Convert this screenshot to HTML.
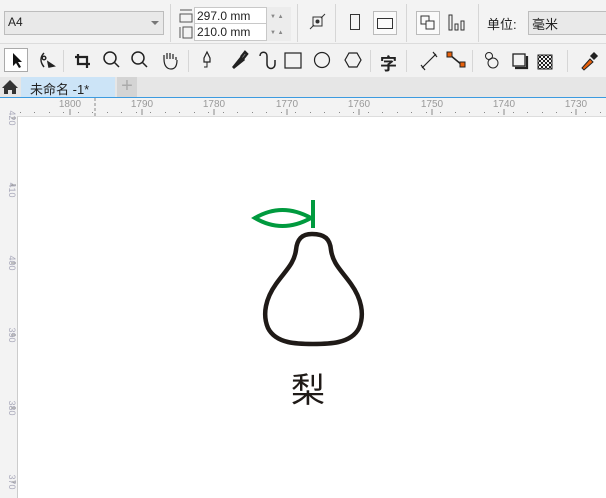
<!DOCTYPE html>
<html><head><meta charset="utf-8"><style>
*{margin:0;padding:0;box-sizing:border-box}
body{width:606px;height:498px;overflow:hidden;background:#f2f2f2;font-family:"Liberation Sans","Noto Sans CJK SC",sans-serif;position:relative}
.a{position:absolute}
.sep{position:absolute;width:1px;background:#d6d6d6}
.t{font-size:12px;color:#222}
</style></head><body>
<!-- toolbar1 -->
<div class="a" style="left:0;top:0;width:606px;height:44px;border-bottom:1px solid #dcdcdc;background:#f3f3f3"></div>
<div class="a" style="left:4px;top:11px;width:160px;height:24px;border:1px solid #bdbdbd;background:#e9e9e9"></div>
<div class="a t" style="left:8px;top:15px">A4</div>
<div class="a" style="left:151px;top:21px;border-left:4px solid transparent;border-right:4px solid transparent;border-top:4px solid #777"></div>
<div class="sep" style="left:170px;top:4px;height:38px"></div>
<svg class="a" style="left:178px;top:8px" width="16" height="32"><path d="M2 2h12M2 6h12v8H2z M2 19v11M5 19h9v11H5z" stroke="#555" fill="none"/></svg>
<div class="a" style="left:194px;top:7px;width:97px;height:34px;border:1px solid #c8c8c8;background:#fff"></div>
<div class="a" style="left:194px;top:23px;width:97px;height:1px;background:#c8c8c8"></div>
<div class="a" style="left:266px;top:7px;width:25px;height:34px;background:#ececec;border-left:1px solid #c8c8c8"></div>
<div class="a t" style="left:197px;top:9px;font-size:12px">297.0 mm</div>
<div class="a t" style="left:197px;top:25px;font-size:12px">210.0 mm</div>
<div class="a" style="left:270px;top:14px;font-size:6px;color:#888">▼ ▲</div>
<div class="a" style="left:270px;top:30px;font-size:6px;color:#888">▼ ▲</div>
<div class="sep" style="left:297px;top:4px;height:38px"></div>
<svg class="a" style="left:308px;top:12px" width="20" height="20"><rect x="5" y="5" width="9" height="9" fill="none" stroke="#333"/><circle cx="9.5" cy="9.5" r="2" fill="#333"/><path d="M2 17l4-4M13 6l4-4" stroke="#333"/></svg>
<div class="sep" style="left:335px;top:4px;height:38px"></div>
<div class="a" style="left:350px;top:14px;width:10px;height:16px;border:1.5px solid #333"></div>
<div class="a" style="left:373px;top:11px;width:24px;height:24px;border:1px solid #bbb;background:#fafafa"></div>
<div class="a" style="left:377px;top:18px;width:16px;height:11px;border:1.5px solid #333"></div>
<div class="sep" style="left:406px;top:4px;height:38px"></div>
<div class="a" style="left:416px;top:11px;width:24px;height:24px;border:1px solid #bbb;background:#fafafa"></div>
<svg class="a" style="left:419px;top:14px" width="18" height="18"><rect x="2" y="2" width="8" height="8" fill="none" stroke="#333"/><rect x="7" y="7" width="8" height="8" fill="#fafafa" stroke="#333"/></svg>
<svg class="a" style="left:447px;top:14px" width="20" height="18"><rect x="2" y="1" width="3" height="15" fill="none" stroke="#333"/><rect x="8" y="10" width="3" height="6" fill="none" stroke="#333"/><rect x="14" y="7" width="3" height="9" fill="none" stroke="#333"/></svg>
<div class="sep" style="left:478px;top:4px;height:38px"></div>
<div class="a t" style="left:487px;top:14px;font-size:13px">单位:</div>
<div class="a" style="left:528px;top:11px;width:80px;height:24px;border:1px solid #bdbdbd;background:#e9e9e9"></div>
<div class="a t" style="left:532px;top:14px;font-size:13px">毫米</div>
<!-- toolbar2 -->
<div class="a" style="left:4px;top:48px;width:24px;height:24px;border:1px solid #aaa;background:#fff"></div>
<svg class="a" style="left:4px;top:48px" width="600" height="26" fill="none" stroke="#222" stroke-width="1.5">
<path d="M9 5v13l3-3 3 5 2-1-3-5h4z" fill="#111" stroke="none"/>
<path d="M40 5c-4 4-4 9 0 14" /><circle cx="40" cy="10" r="1.8" fill="#fff"/><path d="M44 14l6 4-5 1z" fill="#222"/>
<path d="M74 6v10h12M71 9h12v11" stroke-width="2.2"/>
<circle cx="106" cy="10" r="6"/><path d="M110 14l5 5"/>
<circle cx="134" cy="10" r="6"/><path d="M138 14l5 5"/>
<path d="M160 11v-4M163 11v-6M166 11v-6M169 11v-5M172 12v-3M160 11c0 8 4 10 7 10s6-2 6-9" stroke-width="1.2"/>
<path d="M203 4l-3 6v4h6v-4z" stroke-width="1.2"/><path d="M203 14v5h-3" stroke-width="1"/>
<path d="M229 19l8-10 3 3-10 8z" fill="#222"/><path d="M237 9l4-5 2 2-4 5" stroke-width="2.5"/>
<path d="M256 8c0-5 7-5 7 0v8c0 6 8 6 8 0v-4"/>
<rect x="281" y="5" width="16" height="15" stroke-width="1.2"/>
<circle cx="318" cy="12" r="7.5" stroke-width="1.2"/>
<path d="M341 12l4-7h8l4 7-4 7h-8z" stroke-width="1.2"/>
<path d="M418 20l14-14M417 17l4 5M429 4l4 5" stroke-width="1.2"/>
<path d="M446 7l12 10" stroke="#222"/><rect x="443" y="4" width="5" height="5" fill="#e8600a" stroke="#222" stroke-width="1"/><rect x="456" y="14" width="5" height="5" fill="#e8600a" stroke="#222" stroke-width="1"/>
<circle cx="485" cy="8" r="3.5" stroke-width="1"/><circle cx="489" cy="15" r="5" stroke-width="1"/>
<rect x="509" y="6" width="12" height="12" stroke-width="1.3"/><path d="M523 8v12h-12" stroke-width="2.2"/>
<path d="M578 20l8-9 3 3-9 8z" fill="#e8600a" stroke="#222" stroke-width="1"/><path d="M587 8l3-3 3 3-3 3z" fill="#222"/>
</svg>
<svg class="a" style="left:537px;top:54px" width="16" height="16"><defs><pattern id="c" width="4" height="4" patternUnits="userSpaceOnUse"><rect width="2" height="2" fill="#222"/><rect x="2" y="2" width="2" height="2" fill="#222"/></pattern></defs><rect x="1" y="1" width="14" height="14" fill="url(#c)" stroke="#222"/></svg>
<div class="a" style="left:380px;top:50px;font-size:17px;font-weight:bold;color:#222">字</div>
<div class="sep" style="left:63px;top:50px;height:22px"></div>
<div class="sep" style="left:188px;top:50px;height:22px"></div>
<div class="sep" style="left:370px;top:50px;height:22px"></div>
<div class="sep" style="left:406px;top:50px;height:22px"></div>
<div class="sep" style="left:472px;top:50px;height:22px"></div>
<div class="sep" style="left:567px;top:50px;height:22px"></div>
<!-- tabs -->
<div class="a" style="left:0;top:77px;width:606px;height:20px;background:#e6e6e6"></div>
<svg class="a" style="left:1px;top:79px" width="18" height="16"><path d="M9 1L1 9h2v6h4v-4h4v4h4V9h2z" fill="#333"/></svg>
<div class="a" style="left:21px;top:77px;width:94px;height:20px;background:#cce4f7"></div>
<div class="a t" style="left:30px;top:79px;font-size:13px">未命名 -1*</div>
<div class="a" style="left:117px;top:77px;width:20px;height:20px;background:#d4d4d4;color:#aaa;font-size:20px;line-height:19px;text-align:center">+</div>
<div class="a" style="left:0;top:97px;width:606px;height:1px;background:#3c9be0"></div>
<!-- rulers -->
<div class="a" style="left:0;top:98px;width:606px;height:18px;background:#f3f3f3"></div>
<div class="a" style="left:0;top:98px;width:17px;height:400px;background:#f3f3f3"></div>
<div class="a" style="left:17px;top:116px;width:589px;height:382px;background:#fff;border-left:1px solid #ccc;border-top:1px solid #ddd"></div>
<svg class="a" style="left:0;top:98px" width="606" height="400">
<g stroke="#888" stroke-width="1">
<path d="M70 11v6M142 11v6M214 11v6M287 11v6M359 11v6M432 11v6M504 11v6M576 11v6"/>
<path d="M95 0v18" stroke-dasharray="3 2"/>
<path d="M11 20h5M11 87h5M11 165h5M11 237h5M11 310h5M11 384h5"/>
</g>
<g fill="#888">
<path d="M20 14h1v1h-1zM34 14h1v1h-1zM49 14h1v1h-1zM63 14h1v1h-1zM78 14h1v1h-1zM92 14h1v1h-1zM107 14h1v1h-1zM121 14h1v1h-1zM136 14h1v1h-1zM150 14h1v1h-1zM165 14h1v1h-1zM179 14h1v1h-1zM194 14h1v1h-1zM208 14h1v1h-1zM223 14h1v1h-1zM237 14h1v1h-1zM252 14h1v1h-1zM266 14h1v1h-1zM281 14h1v1h-1zM295 14h1v1h-1zM310 14h1v1h-1zM324 14h1v1h-1zM339 14h1v1h-1zM353 14h1v1h-1zM368 14h1v1h-1zM382 14h1v1h-1zM397 14h1v1h-1zM411 14h1v1h-1zM426 14h1v1h-1zM440 14h1v1h-1zM455 14h1v1h-1zM469 14h1v1h-1zM484 14h1v1h-1zM498 14h1v1h-1zM513 14h1v1h-1zM527 14h1v1h-1zM542 14h1v1h-1zM556 14h1v1h-1zM571 14h1v1h-1zM585 14h1v1h-1zM600 14h1v1h-1z"/>
</g>
<g font-family="Liberation Sans" font-size="10" fill="#999" text-anchor="middle">
<text x="70" y="9">1800</text><text x="142" y="9">1790</text><text x="214" y="9">1780</text><text x="287" y="9">1770</text><text x="359" y="9">1760</text><text x="432" y="9">1750</text><text x="504" y="9">1740</text><text x="576" y="9">1730</text>
</g>
<g font-family="Liberation Sans" font-size="9" fill="#aab" text-anchor="middle">
<text transform="translate(9,20) rotate(90)">420</text>
<text transform="translate(9,92) rotate(90)">410</text>
<text transform="translate(9,165) rotate(90)">400</text>
<text transform="translate(9,237) rotate(90)">390</text>
<text transform="translate(9,310) rotate(90)">380</text>
<text transform="translate(9,384) rotate(90)">370</text>
</g>
</svg>
<!-- pear -->
<svg class="a" style="left:0;top:0" width="606" height="498">
<path d="M313 200v28" stroke="#009a3e" stroke-width="4"/>
<path d="M255 218Q282 202 311 218Q282 234 255 218z" fill="none" stroke="#009a3e" stroke-width="4"/>
<path d="M312 234c-10 0-15 5-16 16c-2 14-10 20-20 34c-10 14-14 30-8 44c8 16 30 16 45 16s38 0 46-16c6-14 2-30-8-44c-10-14-18-20-20-34c-1-11-6-16-19-16z" fill="none" stroke="#1f1a17" stroke-width="4.5"/>
</svg>
<div class="a" style="left:291px;top:363px;font-size:34px;color:#1f1a17;font-family:'Noto Sans CJK SC',sans-serif">梨</div>
</body></html>
